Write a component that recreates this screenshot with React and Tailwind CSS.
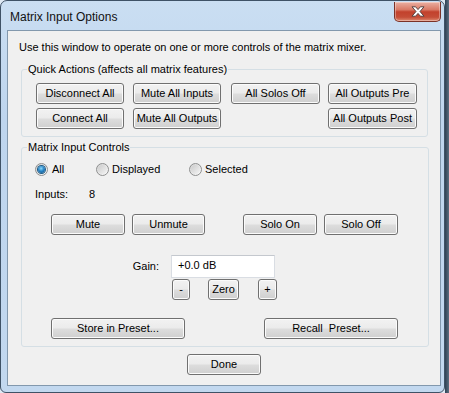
const btnBase =
  "h-[21px] shrink-0 flex items-center justify-center rounded-[3px] border border-[#707070] bg-[linear-gradient(to_bottom,#f2f2f2_0%,#ebebeb_48%,#dddddd_52%,#cfcfcf_100%)] shadow-[inset_0_0_0_1px_#fbfbfb] text-[11px] leading-none text-black whitespace-nowrap";

function Btn({ className = "", children }) {
  return <div className={btnBase + " " + className}>{children}</div>;
}

function Radio({ checked }) {
  return (
    <span className="w-[13px] h-[13px] shrink-0 rounded-full border border-[#8e8f8f] bg-[linear-gradient(135deg,#d4d4d4,#fbfbfb)] flex items-center justify-center">
      {checked ? (
        <span className="w-[7px] h-[7px] rounded-full bg-[radial-gradient(circle_at_45%_35%,#8fdcfb_0%,#2a86c8_45%,#0b4b7e_100%)] shadow-[0_0_0_1px_#1d5b86]" />
      ) : (
        <span className="w-[9px] h-[9px] rounded-full bg-[linear-gradient(135deg,#cbcbcb,#f4f4f4)]" />
      )}
    </span>
  );
}

function CloseButton() {
  return (
    <div className="mt-[1px] w-[47px] h-[20px] shrink-0 rounded-b-[5px] border border-t-0 border-[#7b3227] bg-[linear-gradient(to_bottom,#eab0a2_0%,#d97a66_40%,#c2412c_52%,#c54d37_80%,#de8a70_100%)] shadow-[inset_0_0_0_1px_rgba(255,255,255,0.35)] flex items-center justify-center">
      <svg width="14" height="11" viewBox="0 0 14 11">
        <path
          d="M1 0.8 H4.6 L7 3.6 L9.4 0.8 H13 L9 5.5 L13 10.2 H9.4 L7 7.4 L4.6 10.2 H1 L5 5.5 Z"
          fill="#ffffff"
          stroke="#4a3a38"
          strokeWidth="0.9"
          strokeLinejoin="round"
        />
      </svg>
    </div>
  );
}

export default function App() {
  return (
    <div className="w-[449px] h-[393px] flex overflow-hidden bg-[#dfe9f4] font-['Liberation_Sans',Arial,sans-serif] text-[11px] leading-[13px] text-black">
      <div className="w-[445px] h-[393px] shrink-0 flex flex-col rounded-t-[7px] rounded-b-[6px] border border-[#3f5266] bg-[linear-gradient(to_bottom,#cadef2_0%,#bed5ee_30%,#c2d8ef_100%)] pl-[6px] pr-[3px] pb-[6px]">
        <div className="h-[29px] shrink-0 flex justify-between">
          <div className="pl-[3px] pt-[9px] text-[12px] leading-[14px] text-[#111]">
            Matrix Input Options
          </div>
          <CloseButton />
        </div>
        <div className="flex-1 border border-[#8298ad] bg-[#f0f0f0] flex flex-col">
          <div className="pt-[10px] pl-[11px]">
            Use this window to operate on one or more controls of the matrix mixer.
          </div>

          <fieldset className="mt-[9px] ml-[13px] w-[407px] border border-[#d5dfe5] rounded-[3px] p-0 m-0">
            <legend className="ml-[5px] px-[1px]">Quick Actions (affects all matrix features)</legend>
            <div className="pt-[7px] pb-[7px] pl-[14px] flex flex-col gap-[4px]">
              <div className="flex">
                <Btn className="w-[88px]">Disconnect All</Btn>
                <Btn className="w-[88px] ml-[9px]">Mute All Inputs</Btn>
                <Btn className="w-[89px] ml-[10px]">All Solos Off</Btn>
                <Btn className="w-[89px] ml-[8px]">All Outputs Pre</Btn>
              </div>
              <div className="flex">
                <Btn className="w-[88px]">Connect All</Btn>
                <Btn className="w-[88px] ml-[9px]">Mute All Outputs</Btn>
                <Btn className="w-[89px] ml-[107px]">All Outputs Post</Btn>
              </div>
            </div>
          </fieldset>

          <fieldset className="mt-[4px] ml-[13px] w-[408px] border border-[#d5dfe5] rounded-[3px] p-0 m-0">
            <legend className="ml-[5px] px-[1px]">Matrix Input Controls</legend>
            <div className="pt-[9px] pb-[7px] pl-[13px] flex flex-col">
              <div className="flex items-center h-[13px]">
                <div className="w-[61px] flex items-center gap-[4px]">
                  <Radio checked />
                  <span>All</span>
                </div>
                <div className="w-[93px] flex items-center gap-[3px]">
                  <Radio />
                  <span>Displayed</span>
                </div>
                <div className="flex items-center gap-[3px]">
                  <Radio />
                  <span>Selected</span>
                </div>
              </div>

              <div className="mt-[12px] flex">
                <span className="w-[54px]">Inputs:</span>
                <span>8</span>
              </div>

              <div className="mt-[13px] flex">
                <Btn className="w-[74px] ml-[16px]">Mute</Btn>
                <Btn className="w-[73px] ml-[7px]">Unmute</Btn>
                <Btn className="w-[74px] ml-[38px]">Solo On</Btn>
                <Btn className="w-[74px] ml-[7px]">Solo Off</Btn>
              </div>

              <div className="mt-[20px] flex items-center">
                <span className="w-[124px] text-right">Gain:</span>
                <div className="ml-[12px] w-[104px] h-[23px] border border-[#d9dde3] border-t-[#c4c8ce] bg-white flex items-center pl-[6px] pb-[2px]">
                  +0.0 dB
                </div>
              </div>

              <div className="mt-[1px] flex">
                <Btn className="w-[18px] h-[19px] ml-[137px]">-</Btn>
                <Btn className="w-[31px] h-[19px] ml-[18px]">Zero</Btn>
                <Btn className="w-[19px] h-[19px] ml-[19px]">+</Btn>
              </div>

              <div className="mt-[18px] flex">
                <Btn className="w-[134px] ml-[16px]">Store in Preset...</Btn>
                <Btn className="w-[134px] ml-[79px]">Recall&nbsp; Preset...</Btn>
              </div>
            </div>
          </fieldset>

          <div className="mt-[7px] flex">
            <Btn className="w-[74px] ml-[179px]">Done</Btn>
          </div>
        </div>
      </div>
      <div className="flex-1 bg-[linear-gradient(to_right,#2e4154,#5d6f80)]" />
    </div>
  );
}
